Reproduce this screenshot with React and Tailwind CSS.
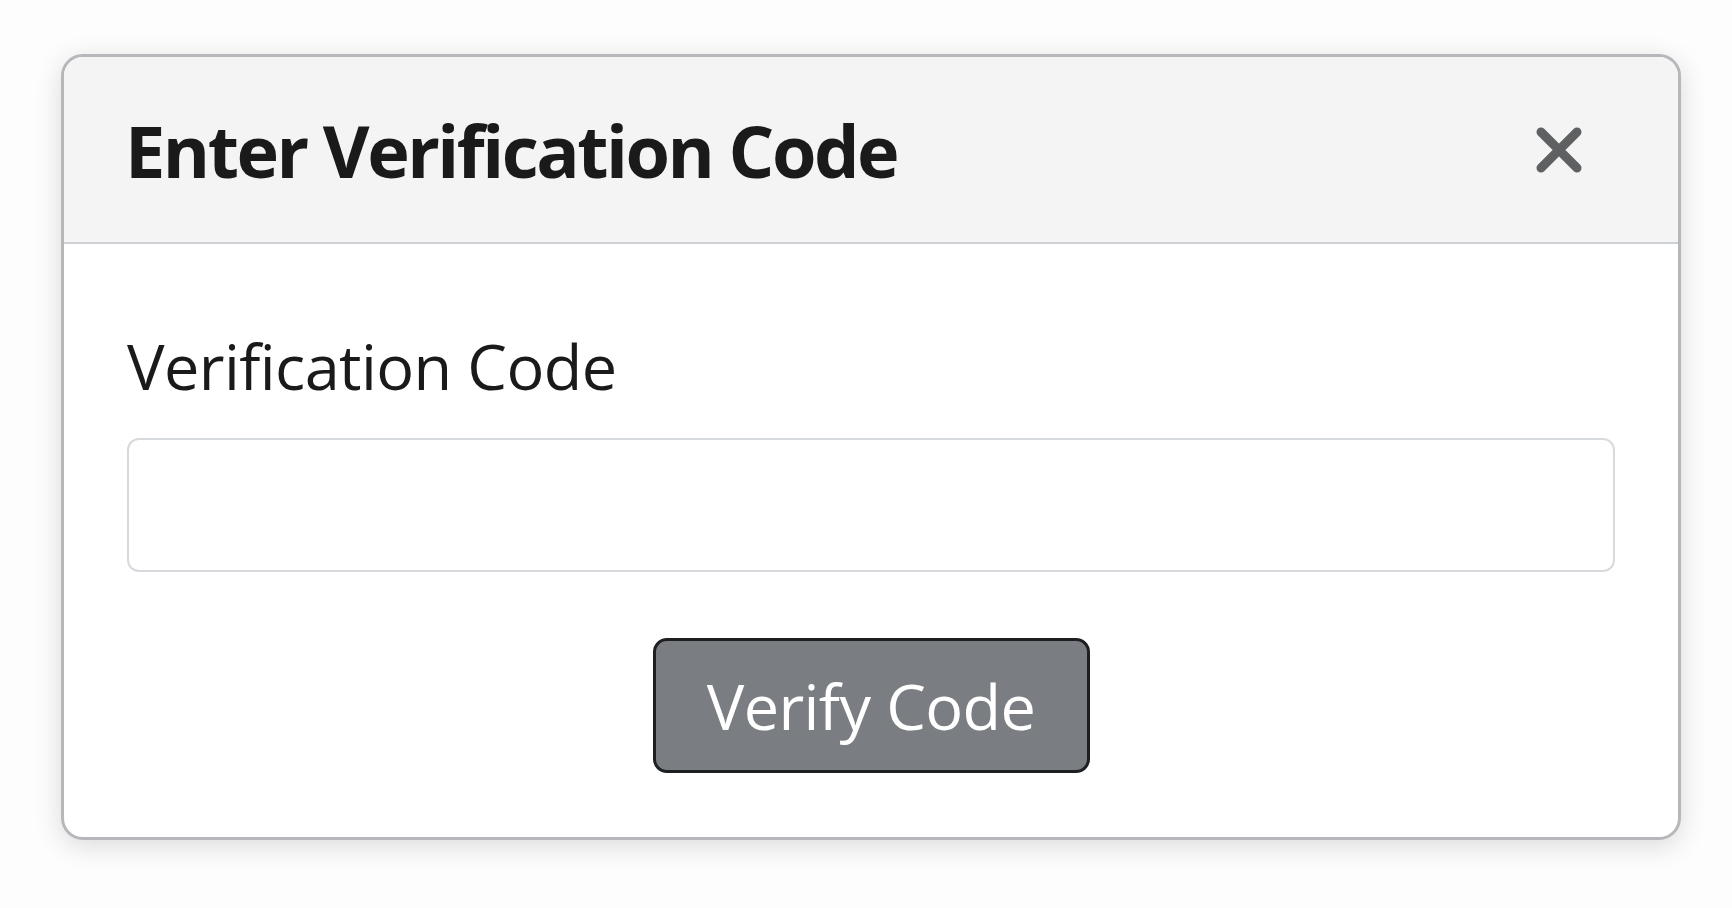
export default function App() {
  return (
    <div
      className="min-h-screen w-full bg-[#fdfdfd] pt-[54px] pl-[61px]"
      style={{ fontFamily: '"Open Sans", "Noto Sans", sans-serif' }}
    >
      <div className="w-[1620px] h-[786px] rounded-[22px] border-[3px] border-[#b5b7ba] bg-white shadow-[0_6px_28px_rgba(0,0,0,0.14)] overflow-hidden flex flex-col">
        <div className="h-[187px] shrink-0 bg-[#f4f4f5] border-b-2 border-[#cdd1d6] flex items-center justify-between pl-[61px] pr-[94px]">
          <h2 className="text-[72px] font-bold text-[#1a1a1a] leading-none tracking-[-2.5px]">Enter Verification Code</h2>
          <button className="text-[#5f6062]">
            <svg width="50" height="50" viewBox="0 0 50 50" fill="none" stroke="currentColor" strokeWidth="9" strokeLinecap="round">
              <path d="M7 7L43 43M43 7L7 43" />
            </svg>
          </button>
        </div>
        <div className="flex flex-col px-[63px] pt-[90px]">
          <label className="text-[63px] text-[#1a1a1a] leading-none tracking-[-0.6px]">Verification Code</label>
          <input
            type="text"
            className="mt-[41px] h-[134px] w-full rounded-[12px] border-2 border-[#d6d9dd] bg-white outline-none"
          />
          <div className="flex justify-center mt-[66px]">
            <button className="h-[135px] w-[437px] rounded-[14px] border-[3px] border-[#1e1f20] bg-[#7a7d81] text-white text-[63px] leading-none tracking-[-0.6px]">
              Verify Code
            </button>
          </div>
        </div>
      </div>
    </div>
  );
}
